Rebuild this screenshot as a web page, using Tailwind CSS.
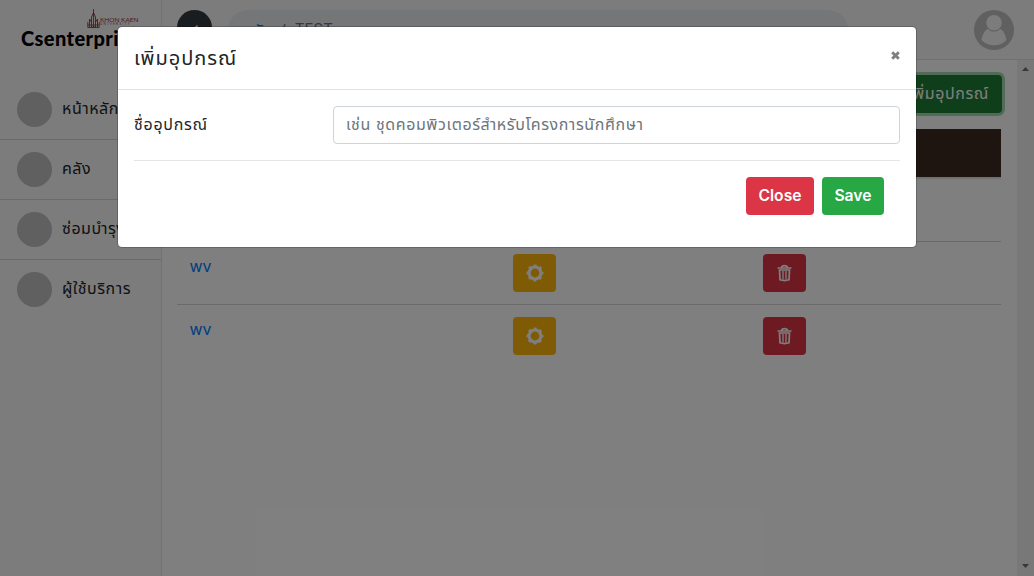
<!DOCTYPE html>
<html lang="th">
<head>
<meta charset="utf-8">
<title>Csenterprise</title>
<script src="https://cdn.jsdelivr.net/npm/@tailwindcss/browser@4"></script>
</head>
<body class="relative h-[576px] w-[1034px] overflow-hidden bg-white font-['Inter','Noto_Sans_Thai',sans-serif] text-base text-[#212529]">
<div class="flex h-full">
  <aside class="flex w-[162px] shrink-0 flex-col border-r border-[#dee2e6] bg-[#f8f8f8] tracking-[0.5px]">
    <div class="h-20 pl-[21px] pt-[9px] tracking-normal">
      <div class="flex h-5 items-center pl-[66px] text-[#9c3434]">
        <svg class="h-5 w-[13px]" viewBox="0 0 13 20" fill="none" stroke="currentColor" stroke-width=".9"><path d="M6.500 0v19M4.500 8l2-4.500 2 4.500v10h-4zM2.500 10v8M10.500 10v8M.8 13v5.500h11.400V13M2.500 10l2 3M10.500 10l-2 3M1 16h11"/></svg>
        <div class="pt-1 font-['Lato'] text-[6.500px] leading-[6px] whitespace-nowrap"><div>KHON KAEN</div><div class="text-[3px] leading-[3px] tracking-[1.4px]">UNIVERSITY</div></div>
      </div>
      <div class="-mt-px font-['Lato'] text-[20px] leading-[20px] font-black tracking-[0.4px] text-black">Csenterprise</div>
    </div>
    <div class="flex h-[60px] items-center gap-[10px] border-b border-[#d4d4d4] pl-[17px]"><i class="size-[35px] rounded-full bg-[#c0c0c0]"></i><span class="pb-[3px]">หน้าหลัก</span></div>
    <div class="flex h-[60px] items-center gap-[10px] border-b border-[#d4d4d4] pl-[17px]"><i class="size-[35px] rounded-full bg-[#c0c0c0]"></i><span class="pb-[3px]">คลัง</span></div>
    <div class="flex h-[60px] items-center gap-[10px] border-b border-[#d4d4d4] pl-[17px]"><i class="size-[35px] rounded-full bg-[#c0c0c0]"></i><span class="pb-[3px] whitespace-nowrap">ซ่อมบำรุง</span></div>
    <div class="flex h-[59px] items-center gap-[10px] pl-[17px]"><i class="size-[35px] rounded-full bg-[#c0c0c0]"></i><span class="pb-[3px]">ผู้ใช้บริการ</span></div>
  </aside>
  <div class="flex grow flex-col">
    <header class="flex h-[60px] shrink-0 items-center border-b border-[#dee2e6] bg-[#f8f8f8] pl-[15px] pr-5">
      <div class="mt-[-4px] grid size-[35px] place-items-center rounded-full bg-[#343a40]"><svg class="mt-1 size-[12px]" viewBox="0 0 14 14" fill="#fff"><path d="M10 1v12L2 7z"/></svg></div>
      <div class="ml-4 flex h-10 w-[620px] items-center gap-2 rounded-full bg-[#e9ecef] pl-[15px]"><span class="tracking-[0.5px] text-[#007bff]">คลัง</span><span class="text-[#6c757d]">/</span><span class="pl-px text-[15px] text-[#6c757d]">TEST</span></div>
      <svg class="ml-auto size-10" viewBox="0 0 40 40"><circle cx="20" cy="20" r="20" fill="#c0c0c0"/><circle cx="20" cy="12.700" r="7.700" fill="#f8f8f8"/><path d="M7.500 30C8.500 24 11 20 14 19c3 3.400 9 3.400 12 0 3 1 5.500 5 6.500 11-6 7-19 7-25 0z" fill="#f8f8f8"/></svg>
    </header>
    <div class="flex min-h-0 grow">
      <main class="grow pl-[15px] pr-4 pt-[15px]">
        <div class="mb-4 flex justify-end"><div class="-mr-px flex h-[38px] items-center rounded bg-[#1e7e34] px-[13px] pb-[2px] tracking-[0.6px] text-white ring-3 ring-[#a3d6ae]">เพิ่มอุปกรณ์</div></div>
        <div class="h-[50px] border-b-2 border-[#dee2e6] bg-[#3c2b20] bg-clip-padding"></div>
        <div class="h-[63px] border-b border-[#d4d4d4]"></div>
        <div class="flex h-[63px] border-b border-[#d4d4d4] pt-3"><span class="w-[323px] pl-[12.500px] text-[#007bff]">wv</span><div class="pl-[13px]"><div class="grid h-[38px] w-[43px] place-items-center rounded bg-[#ffb70a]"><svg class="size-[18px]" viewBox="0 0 18 18" fill="none" stroke="#fff"><circle cx="9" cy="9" r="5.900" stroke-width="3"/><circle cx="9" cy="9" r="7.700" stroke-width="1.600" stroke-dasharray="3 3.047" stroke-dashoffset="1.500"/></svg></div></div><div class="pl-[207px]"><div class="grid h-[38px] w-[43px] place-items-center rounded bg-[#dc3545]"><svg class="h-[18px] w-[15px]" viewBox="0 0 15 18" fill="none" stroke="#fff"><path d="M.5 4h14M4.700 3.300c0-2.300 5.600-2.300 5.600 0" stroke-width="1.700"/><path d="M2.500 6h10l-.5 9.800q-4.500 1.500-9 0z" stroke-width="1.700"/><path d="M6 7v8.500M9 7v8.500" stroke-width="1.300"/></svg></div></div></div>
        <div class="flex h-[63px] pt-3"><span class="w-[323px] pl-[12.500px] text-[#007bff]">wv</span><div class="pl-[13px]"><div class="grid h-[38px] w-[43px] place-items-center rounded bg-[#ffb70a]"><svg class="size-[18px]" viewBox="0 0 18 18" fill="none" stroke="#fff"><circle cx="9" cy="9" r="5.900" stroke-width="3"/><circle cx="9" cy="9" r="7.700" stroke-width="1.600" stroke-dasharray="3 3.047" stroke-dashoffset="1.500"/></svg></div></div><div class="pl-[207px]"><div class="grid h-[38px] w-[43px] place-items-center rounded bg-[#dc3545]"><svg class="h-[18px] w-[15px]" viewBox="0 0 15 18" fill="none" stroke="#fff"><path d="M.5 4h14M4.700 3.300c0-2.300 5.600-2.300 5.600 0" stroke-width="1.700"/><path d="M2.500 6h10l-.5 9.800q-4.500 1.500-9 0z" stroke-width="1.700"/><path d="M6 7v8.500M9 7v8.500" stroke-width="1.300"/></svg></div></div></div>
      </main>
      <div class="flex w-[17px] shrink-0 flex-col items-center justify-between bg-[#f1f1f1] pb-[8px] pt-[7px]"><svg class="h-1 w-[7px]" viewBox="0 0 7 4"><path d="M0 4 3.500 0 7 4z" fill="#707070"/></svg><svg class="h-1 w-[7px]" viewBox="0 0 7 4"><path d="M0 0 3.500 4 7 0z" fill="#707070"/></svg></div>
    </div>
  </div>
</div>
<div class="absolute inset-0 bg-black/50 pl-[117px] pt-[26px]">
  <div class="h-[222px] w-[800px] rounded-[5px] border border-black/20 bg-white bg-clip-padding">
    <div class="flex h-[63px] items-center justify-between border-b border-[#dee2e6] px-4"><h5 class="text-xl tracking-[1px]">เพิ่มอุปกรณ์</h5><svg class="mb-[5px] size-[9px]" viewBox="0 0 9 9" stroke="#7f7f7f" stroke-width="2.900"><path d="m1.200 1.200 6.600 6.600M7.800 1.200 1.200 7.800"/></svg></div>
    <div class="px-4 pt-4">
      <div class="flex items-center"><label class="w-[199px] pb-[2px] tracking-[0.7px]">ชื่ออุปกรณ์</label><div class="flex h-[38px] grow items-center rounded border border-[#ced4da] px-3 pb-[2px] tracking-[0.58px] text-[#6c757d]">เช่น ชุดคอมพิวเตอร์สำหรับโครงการนักศึกษา</div></div>
      <div class="mt-4 flex justify-end gap-2 border-t border-[#e5e5e5] pr-4 pt-4 text-[15.700px] font-semibold text-white"><div class="grid h-[38px] w-[68px] place-items-center rounded bg-[#dc3545] pb-px">Close</div><div class="grid h-[38px] w-[62px] place-items-center rounded bg-[#28a745] pb-px">Save</div></div>
    </div>
  </div>
</div>
</body>
</html>
